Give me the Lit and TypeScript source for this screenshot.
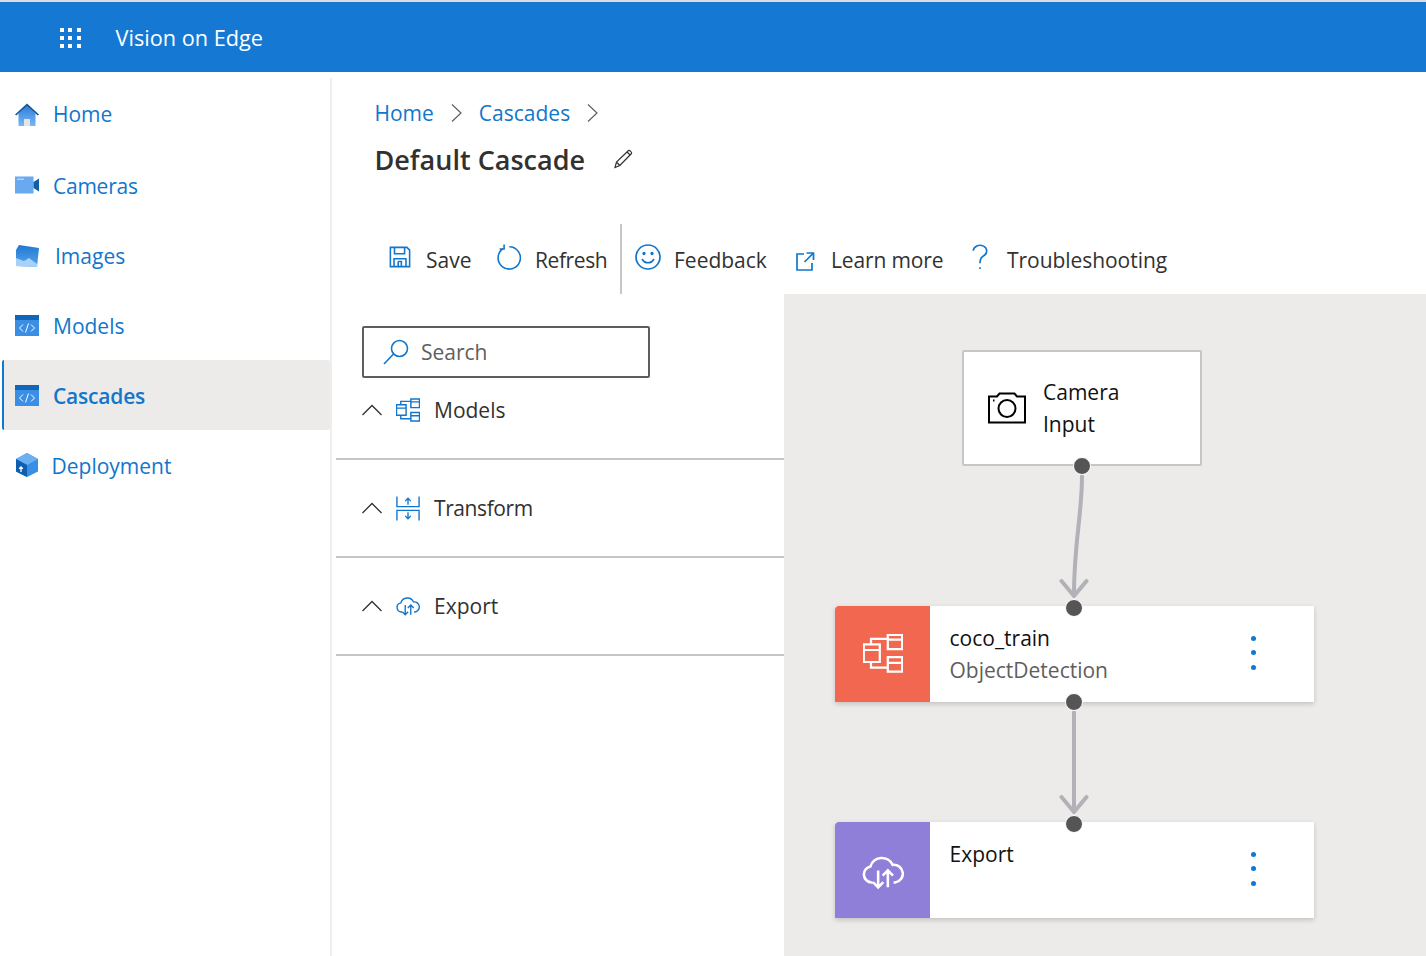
import { html, css, svg, LitElement } from "lit";
import { customElement } from "lit/decorators.js";

const modelsIcon = svg`<path d="M15.500.5h9v9h-9zM15.500 3.500h9M.5 6.500h10v11H.5zM.5 10h10M15.500 14.500h9v9h-9zM15.500 18h9M5 6.500V3h10.500M5 17.500V21h10.500"/>`;
const cloudIcon = svg`<path d="M6.500 17.500H6A5 5 0 0 1 5.200 7.600 7.400 7.400 0 0 1 19 6.600a5.500 5.500 0 0 1 1.500 10.900h-1M10 10v10.500M6.800 17.300l3.200 3.200 3.200-3.200M16 20.500V10M12.800 13.200l3.200-3.200 3.200 3.200"/>`;

const navIcons = {
  home: svg`<svg width="24" height="24" viewBox="0 0 24 24"><defs><linearGradient id="hg" x1="0" y1="0" x2="0" y2="1"><stop offset="0" stop-color="#2f80d8"/><stop offset="1" stop-color="#7ab6f5"/></linearGradient></defs><path d="M3.500 10.500 12 3l8.500 7.500V23H15v-6H9v6H3.500z" fill="url(#hg)"/><path d="M9 16h6v7H9z" fill="#e4e4e4"/><path d="M0 11.500 12 .5l12 11-1.200 1L12 3.200 1.200 12.500z" fill="#12599f"/></svg>`,
  camera: svg`<svg width="24" height="18" viewBox="0 0 24 18"><rect width="18.500" height="17" y=".5" fill="#69a9f0"/><rect x="2" y="2.500" width="7" height="1.500" fill="#a6d6fb"/><path d="M18.500 6 24 2.500v13L18.500 12z" fill="#0f5fa6"/></svg>`,
  image: svg`<svg width="24" height="24" viewBox="0 0 24 24"><defs><linearGradient id="ig" x1="0" y1="0" x2="0" y2="1"><stop offset="0" stop-color="#1f78d1"/><stop offset="1" stop-color="#5aa5ee"/></linearGradient></defs><path d="M4 2 24 5l-2 19-21-1V7z" fill="url(#ig)"/><path d="M1 23v-8l8 3 5-3 8 6v3z" fill="#a5d2f6"/></svg>`,
  code: svg`<svg width="24" height="21" viewBox="0 0 24 21"><rect width="24" height="21" y="0" fill="#3a8ee4"/><rect width="24" height="5" fill="#0f66bb"/><path d="M8 9.500 4.500 13 8 16.500M16 9.500l3.500 3.500-3.500 3.500M13.500 8.500l-3 9" fill="none" stroke="#fff" stroke-width="1"/></svg>`,
  box: svg`<svg width="22" height="24" viewBox="0 0 22 24"><path d="M11 0 22 6v12.500L11 24 0 18.500V6z" fill="#3a8ee4"/><path d="M11 0 22 6 11 12 0 6z" fill="#6bb0f2"/><path d="M0 6l11 6v12L0 18.500z" fill="#0f5fb0"/><path d="M5 19v-5M3.200 15.800 5 14l1.800 1.800" fill="none" stroke="#fff" stroke-width="1.300"/></svg>`,
};

const navItems = [
  { label: "Home", icon: navIcons.home, cls: "top" },
  { label: "Cameras", icon: navIcons.camera, cls: "tight" },
  { label: "Images", icon: navIcons.image, cls: "wide" },
  { label: "Models", icon: navIcons.code, cls: "" },
  { label: "Cascades", icon: navIcons.code, cls: "active" },
  { label: "Deployment", icon: navIcons.box, cls: "narrow" },
];

const tools = [
  { label: "Save", cls: "save", icon: svg`<svg width="22" height="22" viewBox="0 0 24 24"><path d="M1.500 1.500h18l3 3v18h-21zM6 1.500v7h11v-7M5.500 22.500V14h13v8.500M10 17v5.500h3.500V17H10"/></svg>` },
  { label: "Refresh", cls: "refresh", icon: svg`<svg width="26" height="26" viewBox="0 0 28 28"><path d="M9 4.800A12 12 0 1 0 15.500 3M9.800 .5v4.800H5"/></svg>` },
  { label: "Feedback", cls: "feedback", icon: svg`<svg width="26" height="26" viewBox="0 0 26 26"><circle cx="13" cy="13" r="12"/><path d="M7 15c2.800 5 9.200 5 12 0"/><circle cx="9" cy="9.500" r=".8"/><circle cx="17" cy="9.500" r=".8"/></svg>` },
  { label: "Learn more", cls: "learn", icon: svg`<svg width="20" height="20" viewBox="0 0 20 20"><path d="M9 3H2v16h15v-7M9.500 11 18 2.500M11.500 2H18.500V9"/></svg>` },
  { label: "Troubleshooting", cls: "trouble", icon: svg`<svg width="18" height="27" viewBox="0 0 18 28"><path d="M2 7a7 6 0 1 1 10.500 5.500C10 14 9 15.500 9 20M9 24v2"/></svg>` },
];

const sections = [
  { label: "Models", cls: "first", icon: svg`<svg width="25" height="25" viewBox="0 0 25 25">${modelsIcon}</svg>` },
  { label: "Transform", cls: "transform", icon: svg`<svg width="25" height="25" viewBox="0 0 26 26"><path d="M1 0v11h24V0M1 26V15h24v11M13 9V2M10 5l3-3 3 3M13 17v7M10 21l3 3 3-3"/></svg>` },
  { label: "Export", cls: "", icon: svg`<svg width="26" height="22" viewBox="0 0 26 22">${cloudIcon}</svg>` },
];

const flowNodes = [
  { name: "coco_train", sub: "ObjectDetection", cls: "coco", top: 312, icon: svg`<svg width="40" height="40" viewBox="0 0 25 25">${modelsIcon}</svg>` },
  { name: "Export", sub: "", cls: "export", top: 528, icon: svg`<svg width="42" height="36" viewBox="0 0 26 22">${cloudIcon}</svg>` },
];

const ports = [
  { x: 298, y: 172 },
  { x: 290, y: 314 },
  { x: 290, y: 408 },
  { x: 290, y: 530 },
];

@customElement("app-root")
export class AppRoot extends LitElement {
  static styles = css`
    :host {
      display: block;
      width: 1426px;
      height: 956px;
      overflow: hidden;
      background: #fff;
      color: #323130;
      font-family: "Open Sans", "Noto Sans", sans-serif;
      font-size: 21px;
    }
    .topbar {
      height: 72px;
      box-sizing: border-box;
      border-top: 2px solid #dcdcdc;
      padding: 2px 0 0 60px;
      background: #1579d3;
      color: #fff;
      display: flex;
      align-items: center;
      gap: 35px;
    }
    .waffle {
      display: grid;
      grid-template-columns: repeat(3, 4px);
      gap: 4.300px;
    }
    .waffle i {
      height: 4px;
      background: #fff;
    }
    .brand {
      font-size: 21.700px;
      padding-bottom: 2px;
    }
    .layout {
      display: flex;
      height: 884px;
    }
    .sidebar {
      width: 328px;
      flex: none;
      margin-top: 6px;
      padding: 2px 0 0 2px;
      border-right: 2px solid #eeeeee;
    }
    .nav-item {
      height: 70px;
      display: flex;
      align-items: center;
      color: #1176cc;
      padding-left: 13px;
      box-sizing: border-box;
      gap: 14px;
    }
    .nav-item .ico {
      width: 24px;
      display: flex;
      justify-content: center;
    }
    .nav-item .label {
      padding-top: 2px;
    }
    .nav-item.top .label {
      padding: 0 0 2px;
    }
    .nav-item.tight .label {
      letter-spacing: -0.250px;
    }
    .nav-item.wide {
      gap: 16px;
    }
    .nav-item.narrow {
      gap: 12.500px;
    }
    .nav-item.active {
      background: #ecebe9;
      border-left: 2px solid #0f78d4;
      padding-left: 11px;
      font-weight: 600;
      border-radius: 2px;
      letter-spacing: -0.200px;
    }
    .main {
      flex: 1;
      min-width: 0;
      display: flex;
      flex-direction: column;
    }
    .crumbs {
      height: 30px;
      margin: 26px 0 0 42.500px;
      display: flex;
      align-items: center;
      color: #1176cc;
      gap: 17px;
    }
    .crumbs svg {
      fill: none;
      stroke: #605e5c;
      stroke-width: 1.200;
    }
    .title {
      margin: 14px 0 0 42.500px;
      height: 36px;
      display: flex;
      align-items: center;
      gap: 28px;
      font-size: 27px;
      font-weight: 600;
      line-height: 36px;
    }
    .title svg {
      fill: none;
      stroke: #323130;
      stroke-width: 1.200;
      margin-bottom: 2px;
    }
    .toolbar {
      margin-top: 46px;
      height: 70px;
      display: flex;
      align-items: center;
      padding-left: 56px;
    }
    .tool {
      display: flex;
      align-items: center;
      gap: 14px;
    }
    .tool span {
      padding-top: 2px;
    }
    .tool svg {
      fill: none;
      stroke: #1176cc;
      stroke-width: 1.700;
      margin-bottom: 4px;
    }
    .tool.save {
      width: 107px;
      gap: 15px;
    }
    .tool.save svg {
      margin-left: 1px;
    }
    .tool.refresh {
      width: 125px;
      height: 70px;
      border-right: 2px solid #c8c6c4;
      letter-spacing: -0.400px;
    }
    .tool.feedback {
      margin-left: 13px;
      width: 160px;
      gap: 13px;
    }
    .tool.learn {
      width: 176px;
      gap: 16px;
      letter-spacing: -0.150px;
    }
    .tool.learn svg {
      margin: 4px 0 0;
    }
    .tool.trouble {
      gap: 18px;
      letter-spacing: -0.050px;
    }
    .content {
      flex: 1;
      display: flex;
      min-height: 0;
    }
    .panel {
      width: 448px;
      margin-left: 4px;
      flex: none;
    }
    .search {
      margin: 32px 0 0 26px;
      width: 288px;
      height: 52px;
      box-sizing: border-box;
      border: 2px solid #605e5c;
      border-radius: 2px;
      display: flex;
      align-items: center;
      padding-left: 18px;
      gap: 11px;
      color: #605e5c;
    }
    .search svg {
      fill: none;
      stroke: #1176cc;
      stroke-width: 1.600;
    }
    .section {
      height: 98px;
      box-sizing: border-box;
      border-bottom: 2px solid #c8c6c4;
      padding: 32px 0 0 26px;
      display: flex;
      align-items: flex-start;
      gap: 14px;
      line-height: 32px;
    }
    .section.first {
      height: 82px;
      padding-top: 16px;
    }
    .section.transform .text-label {
      letter-spacing: -0.400px;
    }
    .section .chev {
      fill: none;
      stroke: #323130;
      stroke-width: 1.300;
      margin-top: 10px;
    }
    .section .ico {
      width: 24px;
      height: 32px;
      display: flex;
      align-items: center;
    }
    .section .ico svg {
      fill: none;
      stroke: #1176cc;
      stroke-width: 1.500;
    }
    .canvas {
      flex: 1;
      position: relative;
      background: #ecebe9;
    }
    .camera-node {
      position: absolute;
      left: 178px;
      top: 56px;
      width: 240px;
      height: 116px;
      box-sizing: border-box;
      border: 2px solid #c8c6c4;
      border-radius: 2px;
      background: #fff;
      color: #111;
      display: flex;
      align-items: center;
      padding-left: 23px;
      gap: 16px;
      line-height: 32px;
    }
    .camera-node svg {
      fill: none;
      stroke: #000;
      stroke-width: 2;
      margin-bottom: 2px;
    }
    .node {
      position: absolute;
      left: 51px;
      width: 479px;
      height: 96px;
      background: #fff;
      display: flex;
      box-shadow: 0 2px 5px rgba(0, 0, 0, 0.18);
      border-radius: 2px 0 0 0;
      line-height: 32px;
      color: #111;
    }
    .swatch {
      width: 95px;
      flex: none;
      display: flex;
      align-items: center;
      justify-content: center;
      border-radius: 4px 0 0 0;
    }
    .swatch svg {
      fill: none;
      stroke: #fff;
      stroke-width: 1.600;
    }
    .coco .swatch {
      background: #f2674f;
    }
    .coco .swatch svg {
      stroke-width: 1.400;
    }
    .export .swatch {
      background: #8f7fd9;
    }
    .export .swatch svg {
      margin-top: 4px;
    }
    .text {
      flex: 1;
      padding: 16px 0 0 19.500px;
    }
    .sub {
      color: #605e5c;
    }
    .dots {
      width: 63.500px;
      display: flex;
      flex-direction: column;
      gap: 9.500px;
      padding-top: 29.500px;
      box-sizing: border-box;
      flex: none;
    }
    .dots i {
      width: 5px;
      height: 5px;
      border-radius: 50%;
      background: #0f78d4;
    }
    .edges {
      position: absolute;
      inset: 0;
      fill: none;
      stroke: #b1b1b7;
      stroke-width: 4;
      stroke-linecap: round;
      stroke-linejoin: round;
    }
    .port {
      position: absolute;
      width: 16px;
      height: 16px;
      margin: -9.500px 0 0 -9.500px;
      border: 1.500px solid #fff;
      border-radius: 50%;
      background: #555;
    }
  `;

  render() {
    return html`
      <div class="topbar">
        <div class="waffle">${Array.from({ length: 9 }, () => html`<i></i>`)}</div>
        <div class="brand">Vision on Edge</div>
      </div>
      <div class="layout">
        <nav class="sidebar">
          ${navItems.map(
            (n) => html`<div class="nav-item ${n.cls}">
              <span class="ico">${n.icon}</span><span class="label">${n.label}</span>
            </div>`
          )}
        </nav>
        <div class="main">
          <div class="crumbs">
            <span>Home</span>
            <svg width="11" height="18" viewBox="0 0 11 18"><path d="M1 .5 10 9l-9 8.500"/></svg>
            <span>Cascades</span>
            <svg width="11" height="18" viewBox="0 0 11 18"><path d="M1 .5 10 9l-9 8.500"/></svg>
          </div>
          <div class="title">
            <span>Default Cascade</span>
            <svg width="22" height="20" viewBox="0 0 22 20"><path d="M2 18.500 3.500 13 15.500 1.500c1-.8 3.800 2 3 3L6.800 16.500zM3.500 13l3.300 3.500M14 3l3.500 3.300"/></svg>
          </div>
          <div class="toolbar">
            ${tools.map((t) => html`<div class="tool ${t.cls}">${t.icon}<span>${t.label}</span></div>`)}
          </div>
          <div class="content">
            <div class="panel">
              <div class="search">
                <svg width="28" height="26" viewBox="0 0 28 26"><circle cx="17.500" cy="9.500" r="8"/><path d="M11.500 15 2 25"/></svg>
                <span>Search</span>
              </div>
              ${sections.map(
                (s) => html`<div class="section ${s.cls}">
                  <svg class="chev" width="20" height="12" viewBox="0 0 20 12"><path d="M.5 11 10 1.500 19.500 11"/></svg>
                  <span class="ico">${s.icon}</span>
                  <span class="text-label">${s.label}</span>
                </div>`
              )}
            </div>
            <div class="canvas">
              <div class="camera-node">
                <svg width="40" height="34" viewBox="0 0 40 34"><path d="M2 6.500h8l2.500-3h15l2.500 3h8v26H2z"/><circle cx="20" cy="18.500" r="8.500"/><path d="M6 10.500h1.500"/></svg>
                <div>Camera<br />Input</div>
              </div>
              ${flowNodes.map(
                (n) => html`<div class="node ${n.cls}" style="top:${n.top}px">
                  <div class="swatch">${n.icon}</div>
                  <div class="text">
                    <div>${n.name}</div>
                    ${n.sub ? html`<div class="sub">${n.sub}</div>` : ""}
                  </div>
                  <div class="dots"><i></i><i></i><i></i></div>
                </div>`
              )}
              <svg class="edges" width="642" height="662" viewBox="0 0 642 662">
                <path d="M298 182C298 220 290 250 290 300M277.500 287 290 302l12.500-15" />
                <path d="M290 418V516M277.500 503 290 518l12.500-15" />
              </svg>
              ${ports.map((p) => html`<span class="port" style="left:${p.x}px;top:${p.y}px"></span>`)}
            </div>
          </div>
        </div>
      </div>
    `;
  }
}
